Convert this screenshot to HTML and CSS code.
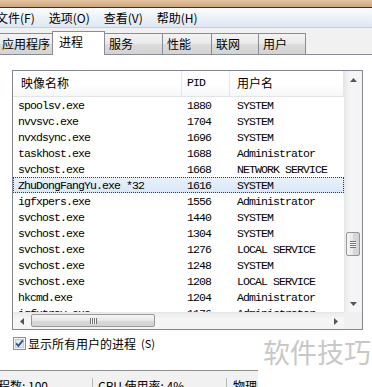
FILE: index.html
```html
<!DOCTYPE html>
<html lang="zh-CN">
<head>
    <meta charset="UTF-8">
    <meta name="viewport" content="width=device-width, initial-scale=1.0">
    <title>Windows 任务管理器</title>
    <link rel="stylesheet" href="styles.css">
</head>
<body>
<div class="window">
    <div class="titlebar"></div>

    <div class="menubar">
        <span>文件(F)</span>
        <span>选项(O)</span>
        <span>查看(V)</span>
        <span>帮助(H)</span>
    </div>

    <div class="tabs">
        <div class="tab">应用程序</div>
        <div class="tab active">进程</div>
        <div class="tab">服务</div>
        <div class="tab">性能</div>
        <div class="tab">联网</div>
        <div class="tab">用户</div>
    </div>

    <div class="pane">
        <div class="listbox">
            <div class="view">
                <div class="row head">
                    <div class="cell cjk name">映像名称</div>
                    <div class="cell pid">PID</div>
                    <div class="cell cjk user">用户名</div>
                </div>
                <div class="row"><div class="cell name">spoolsv.exe</div><div class="cell pid">1880</div><div class="cell user">SYSTEM</div></div>
                <div class="row"><div class="cell name">nvvsvc.exe</div><div class="cell pid">1704</div><div class="cell user">SYSTEM</div></div>
                <div class="row"><div class="cell name">nvxdsync.exe</div><div class="cell pid">1696</div><div class="cell user">SYSTEM</div></div>
                <div class="row"><div class="cell name">taskhost.exe</div><div class="cell pid">1688</div><div class="cell user">Administrator</div></div>
                <div class="row"><div class="cell name">svchost.exe</div><div class="cell pid">1668</div><div class="cell user">NETWORK SERVICE</div></div>
                <div class="row sel"><div class="cell name">ZhuDongFangYu.exe *32</div><div class="cell pid">1616</div><div class="cell user">SYSTEM</div></div>
                <div class="row"><div class="cell name">igfxpers.exe</div><div class="cell pid">1556</div><div class="cell user">Administrator</div></div>
                <div class="row"><div class="cell name">svchost.exe</div><div class="cell pid">1440</div><div class="cell user">SYSTEM</div></div>
                <div class="row"><div class="cell name">svchost.exe</div><div class="cell pid">1304</div><div class="cell user">SYSTEM</div></div>
                <div class="row"><div class="cell name">svchost.exe</div><div class="cell pid">1276</div><div class="cell user">LOCAL SERVICE</div></div>
                <div class="row"><div class="cell name">svchost.exe</div><div class="cell pid">1248</div><div class="cell user">SYSTEM</div></div>
                <div class="row"><div class="cell name">svchost.exe</div><div class="cell pid">1208</div><div class="cell user">LOCAL SERVICE</div></div>
                <div class="row"><div class="cell name">hkcmd.exe</div><div class="cell pid">1204</div><div class="cell user">Administrator</div></div>
                <div class="row"><div class="cell name">igfxtray.exe</div><div class="cell pid">1176</div><div class="cell user">Administrator</div></div>
            </div>

            <div class="vscroll">
                <div class="btn"><svg width="7" height="4" viewBox="0 0 7 4"><path d="M0 4L3.5 0L7 4Z" fill="#555"/></svg></div>
                <div class="vthumb"><span class="grip"></span></div>
                <div class="btn down"><svg width="7" height="4" viewBox="0 0 7 4"><path d="M0 0L3.5 4L7 0Z" fill="#555"/></svg></div>
            </div>

            <div class="hscroll">
                <div class="btn"><svg width="4" height="7" viewBox="0 0 4 7"><path d="M4 0L0 3.5L4 7Z" fill="#555"/></svg></div>
                <div class="hthumb"><span class="grip"></span></div>
                <div class="btn right"><svg width="4" height="7" viewBox="0 0 4 7"><path d="M0 0L4 3.5L0 7Z" fill="#555"/></svg></div>
            </div>

            <div class="corner"></div>
        </div>

        <label class="check">
            <svg width="13" height="13" viewBox="0 0 13 13">
                <rect x="0.5" y="0.5" width="12" height="12" fill="#f6f6f6" stroke="#8e8f8f"/>
                <rect x="2.5" y="2.5" width="8" height="8" fill="#e3e8ee" stroke="#c3cad3"/>
                <path d="M3.2 6.4L5.4 8.9L9.9 3.4" fill="none" stroke="#2b4f8e" stroke-width="1.8"/>
            </svg>
            <span>显示所有用户的进程</span><span class="key">(S)</span>
        </label>
    </div>

    <div class="statusbar">
        <div class="item first">进程数: 100</div>
        <div class="item second">CPU 使用率: 4%</div>
        <div class="item">物理内存: 43%</div>
    </div>

    <div class="watermark">软件技巧</div>
</div>
</body>
</html>
```

FILE: styles.css
```css
body {
    margin: 0;
    width: 372px;
    height: 387px;
    overflow: hidden;
    background: #f1f1f1;
    font-family: "Noto Sans CJK SC", sans-serif;
    font-size: 12px;
    color: #000;
}
.window {
    position: relative;
    height: 387px;
}

/* title strip + menu */
.titlebar {
    height: 7px;
    background: linear-gradient(#e4c4a2, #d0a77d);
    border-bottom: 1px solid #3d3128;
}
.menubar {
    display: flex;
    gap: 14px;
    height: 19px;
    line-height: 19px;
    background: linear-gradient(#fbfcfe, #dfe7f2);
    border-bottom: 1px solid #c6d0dc;
}
.menubar span:first-child {
    margin-left: -4px;
}

/* tabs */
.tabs {
    display: flex;
    align-items: flex-end;
    height: 26px;
    border-bottom: 1px solid #898c95;
}
.tab {
    box-sizing: border-box;
    height: 21px;
    line-height: 20px;
    padding-left: 4px;
    margin-left: -1px;
    border: 1px solid #898c95;
    border-bottom: none;
    background: linear-gradient(#f4f4f4, #e9e9e9 50%, #dcdcdc 51%, #d3d3d3);
}
.tab:nth-child(1) { width: 56px; margin-left: -3px; }
.tab:nth-child(2) { width: 53px; }
.tab:nth-child(3) { width: 59px; }
.tab:nth-child(4) { width: 50px; }
.tab:nth-child(5) { width: 48px; }
.tab:nth-child(6) { width: 48px; }
.tab.active {
    position: relative;
    z-index: 1;
    height: 24px;
    margin-bottom: -1px;
    padding-left: 6px;
    background: #fff;
}

/* process tab page */
.pane {
    height: 316px;
    padding: 15px 0 0 12px;
    box-sizing: border-box;
    background: #fff;
    border-bottom: 1px solid #8e8f8f;
}
.listbox {
    box-sizing: border-box;
    width: 351px;
    height: 260px;
    border: 1px solid #828790;
    background: #fff;
    display: grid;
    grid-template-columns: 331px 18px;
    grid-template-rows: 241px 17px;
}
.view {
    overflow: hidden;
}
.row {
    display: grid;
    grid-template-columns: 169px 48px 114px;
    height: 16px;
    line-height: 17px;
    font-family: "Liberation Mono", monospace;
    font-size: 11.5px;
    letter-spacing: -0.9px;
    white-space: nowrap;
}
.cell {
    box-sizing: border-box;
    overflow: hidden;
}
.cell.name { padding-left: 5px; }
.cell.pid { padding-left: 5px; }
.cell.user { padding-left: 7px; }
.row.sel {
    background: linear-gradient(#eaf2fc, #d8e6f6);
    outline: 1px dotted #3a3a3a;
    outline-offset: -1px;
}
.head {
    height: 25px;
    line-height: 24px;
    background: linear-gradient(#fff 50%, #f6f7f9);
    border-bottom: 1px solid #e3e5e8;
}
.head .cell {
    border-right: 1px solid #e3e5e8;
}
.head .cjk {
    font-family: "Noto Sans CJK SC", sans-serif;
    font-size: 12px;
    letter-spacing: 0;
}
.head .name { padding-left: 8px; }

/* scrollbars */
.vscroll {
    display: flex;
    flex-direction: column;
    border-left: 1px solid #e6e6e6;
    background: linear-gradient(to right, #ececec, #f6f6f6 40%, #f3f3f3);
}
.hscroll {
    display: flex;
    border-top: 1px solid #e6e6e6;
    background: linear-gradient(#ececec, #f6f6f6 40%, #f3f3f3);
}
.btn {
    display: flex;
    align-items: center;
    justify-content: center;
    width: 17px;
    height: 17px;
    flex: none;
}
.hscroll .btn { height: 16px; }
.btn.down { margin-top: auto; }
.btn.right { margin-left: auto; }
.vthumb, .hthumb {
    box-sizing: border-box;
    display: flex;
    align-items: center;
    justify-content: center;
    border: 1px solid #979797;
    border-radius: 2px;
}
.vthumb {
    height: 24px;
    margin: 144px 2px 0 1px;
    background: linear-gradient(to right, #f5f5f5, #e7e7e7 50%, #d9d9d9 51%, #d3d3d3);
}
.hthumb {
    width: 124px;
    height: 13px;
    margin: 1px 0 0 1px;
    background: linear-gradient(#f5f5f5, #e7e7e7 50%, #d9d9d9 51%, #d3d3d3);
}
.vthumb .grip {
    width: 6px;
    height: 7px;
    background: repeating-linear-gradient(#707070 0 1px, #fafafa 1px 2px);
}
.hthumb .grip {
    width: 7px;
    height: 6px;
    background: repeating-linear-gradient(to right, #707070 0 1px, #fafafa 1px 2px);
}
.corner {
    background: #f0f0f0;
}

/* checkbox */
.check {
    display: flex;
    align-items: center;
    gap: 2px;
    height: 13px;
    margin: 7px 0 0 1px;
    line-height: 13px;
}
.check .key {
    margin-left: 3px;
    font-size: 11px;
}

/* status bar */
.statusbar {
    display: flex;
    height: 13px;
    padding-top: 7px;
    line-height: 16px;
    white-space: nowrap;
}
.item {
    padding-left: 6px;
    border-left: 1px solid #b9b9b9;
}
.item.first {
    width: 106px;
    margin-left: -14px;
    padding-left: 0;
    border-left: none;
}
.item.second {
    width: 134px;
    box-sizing: border-box;
    padding-left: 5px;
}

.watermark {
    position: absolute;
    left: 258px;
    top: 334px;
    right: 0;
    bottom: 0;
    padding: 3px 0 0 5px;
    background: #fff;
    color: #c8c8c8;
    font-size: 27px;
    line-height: 30px;
}
```
